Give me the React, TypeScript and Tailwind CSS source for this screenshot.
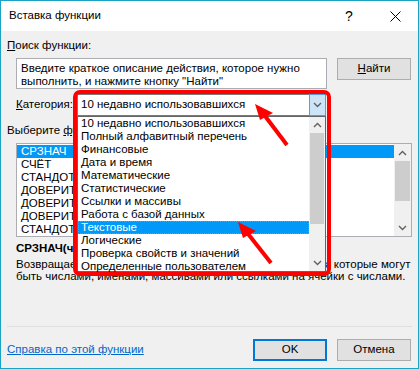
import type { ReactNode } from 'react'

const CATEGORIES = [
  '10 недавно использовавшихся',
  'Полный алфавитный перечень',
  'Финансовые',
  'Дата и время',
  'Математические',
  'Статистические',
  'Ссылки и массивы',
  'Работа с базой данных',
  'Текстовые',
  'Логические',
  'Проверка свойств и значений',
  'Определенные пользователем',
]

const FUNCS = ['СРЗНАЧ', 'СЧЁТ', 'СТАНДОТКЛОН.В', 'ДОВЕРИТ.СТЬЮДЕНТ', 'ДОВЕРИТ.НОРМ', 'ДОВЕРИТ', 'СТАНДОТКЛОН.Г']

function Chevron({ up }: { up?: boolean }) {
  return (
    <svg width="9" height="6" viewBox="0 0 9 6">
      <polyline
        points={up ? '1,5 4.5,1.5 8,5' : '1,1 4.5,4.5 8,1'}
        fill="none"
        stroke="#606060"
        strokeWidth="1.4"
      />
    </svg>
  )
}

function Scrollbar({ arrowH, thumbH, width }: { arrowH: number; thumbH: number; width: string }) {
  return (
    <div className={`${width} bg-[#f0f0f0] flex flex-col`}>
      <div className="flex items-center justify-center" style={{ height: arrowH }}>
        <Chevron up />
      </div>
      <div className="mx-[1px] bg-[#cdcdcd]" style={{ height: thumbH }} />
      <div className="flex-1" />
      <div className="flex items-center justify-center" style={{ height: arrowH }}>
        <Chevron />
      </div>
    </div>
  )
}

function Btn({ children, primary }: { children: ReactNode; primary?: boolean }) {
  return (
    <div
      className={`w-[74px] h-[22px] flex items-center justify-center bg-[#e1e1e1] ${
        primary ? 'border-2 border-[#0078d7]' : 'border border-[#adadad]'
      }`}
    >
      {children}
    </div>
  )
}

export default function App() {
  return (
    <div className="relative w-[419px] h-[369px] border border-[#1ba3c6] bg-[#f0f0f0] flex flex-col text-[11.5px] text-black font-['Liberation_Sans',Arial,sans-serif] overflow-hidden whitespace-nowrap">
      {/* title bar */}
      <div className="h-[30px] bg-white flex items-center pl-[8px]">
        <span>Вставка функции</span>
        <div className="ml-auto flex items-center">
          <div className="w-[46px] flex justify-center text-[14px]">?</div>
          <div className="w-[46px] flex justify-center">
            <svg width="11" height="11" viewBox="0 0 11 11">
              <path d="M0.5 0.5 L10.5 10.5 M10.5 0.5 L0.5 10.5" stroke="#000" strokeWidth="1" />
            </svg>
          </div>
        </div>
      </div>

      <div className="pl-[6px] mt-[7px] leading-[15px]">
        <span className="underline">П</span>оиск функции:
      </div>

      <div className="flex mt-[5px] ml-[15px]">
        <div className="w-[311px] h-[31px] bg-white border border-[#abadb3] pl-[4px] pt-[3px] leading-[13px]">
          Введите краткое описание действия, которое нужно
          <br />
          выполнить, и нажмите кнопку "Найти"
        </div>
        <div className="ml-[10px]">
          <Btn>
            <span className="underline">Н</span>айти
          </Btn>
        </div>
      </div>

      <div className="flex items-center mt-[5px] ml-[15px] h-[22px]">
        <span className="w-[61px]">
          <span className="underline">К</span>атегория:
        </span>
        <div className="relative w-[249px] h-[22px] bg-white border border-[#7a7a7a] flex items-center">
          <span className="pl-[3px]">10 недавно использовавшихся</span>
          <div className="ml-auto w-[17px] h-[22px] -mr-[1px] -my-[1px] bg-[#cce4f7] border border-[#569de5] flex items-center justify-center">
            <Chevron />
          </div>
          {/* open dropdown */}
          <div className="absolute left-[-1px] top-[21px] w-[249px] h-[156px] bg-white border border-[#646464] flex z-10">
            <div className="flex-1">
              {CATEGORIES.map((c, i) => (
                <div
                  key={c}
                  className={`h-[13px] leading-[13px] pl-[3px] ${
                    i === 8 ? 'bg-[#0099f7] text-white outline-1 outline-dotted outline-[#e0801c] -outline-offset-1' : ''
                  }`}
                >
                  {c}
                </div>
              ))}
            </div>
            <Scrollbar width="w-[16px]" arrowH={16} thumbH={91} />
          </div>
        </div>
      </div>

      <div className="pl-[6px] mt-[7px] leading-[15px]">
        Выберите <span className="underline">фу</span>нкцию:
      </div>

      <div className="ml-[15px] mt-[5px] w-[396px] h-[94px] bg-white border border-[#abadb3] flex">
        <div className="flex-1 pt-[1px]">
          {FUNCS.map((f, i) => (
            <div
              key={f}
              className={`h-[13px] leading-[13px] pl-[4px] ${i === 0 ? 'bg-[#0099f7] text-white' : ''}`}
            >
              {f}
            </div>
          ))}
        </div>
        <Scrollbar width="w-[17px]" arrowH={17} thumbH={40} />
      </div>

      <div className="ml-[15px] mt-[4px] leading-[15px] font-bold">СРЗНАЧ(число1;число2;...)</div>
      <div className="ml-[15px] mt-[2px] leading-[12px]">
        Возвращает среднее (арифметическое) своих аргументов, которые могут
        <br />
        быть числами, именами, массивами или ссылками на ячейки с числами.
      </div>

      <div className="mt-auto mx-[6px] border-t border-[#dfdfdf] flex items-center pt-[12px] pb-[7px]">
        <span className="text-[#0066cc] underline">Справка по этой функции</span>
        <div className="ml-auto flex gap-[10px] pr-[1px]">
          <Btn primary>OK</Btn>
          <Btn>Отмена</Btn>
        </div>
      </div>

      {/* annotation */}
      <div className="absolute left-[72px] top-[89px] w-[258px] h-[186px] border-4 border-[#ff0000] rounded-[7px] z-20 pointer-events-none" />
      <svg className="absolute left-[-1px] top-[-1px] z-30 pointer-events-none" width="419" height="369" viewBox="0 0 419 369">
        <line x1="287" y1="145" x2="262" y2="112" stroke="#ff0000" strokeWidth="4" />
        <polygon points="255,104 273,113 260,120" fill="#ff0000" />
        <line x1="271" y1="263" x2="245" y2="230" stroke="#ff0000" strokeWidth="4" />
        <polygon points="238,222 256,231 243,238" fill="#ff0000" />
      </svg>
    </div>
  )
}
